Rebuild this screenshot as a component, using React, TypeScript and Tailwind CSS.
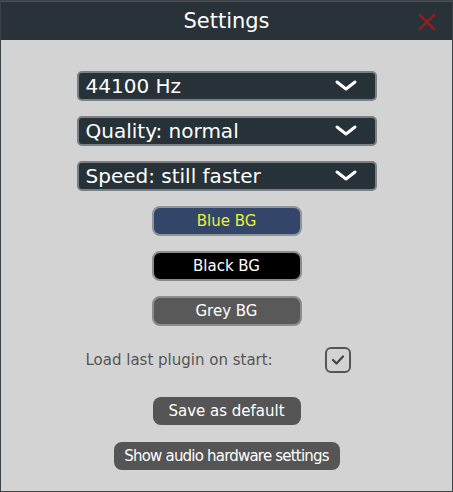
import React from "react";

const font = { fontFamily: '"DejaVu Sans", Verdana, sans-serif' };

function Chevron() {
  return (
    <svg width="24" height="14" viewBox="0 0 24 14" className="shrink-0">
      <path d="M3 3 L12 10 L21 3" fill="none" stroke="white" strokeWidth="3" strokeLinecap="round" strokeLinejoin="round" />
    </svg>
  );
}

function Dropdown({ label }: { label: string }) {
  return (
    <div className="w-[300px] h-[30px] bg-[#263238] border-2 border-[#7b8084] rounded-[5px] flex items-center justify-between pl-[7px] pr-[17px] text-white text-[20px] leading-none">
      <span className="whitespace-nowrap">{label}</span>
      <Chevron />
    </div>
  );
}

export default function App() {
  return (
    <div style={font} className="w-[453px] h-[492px] bg-[#d3d3d3] border border-[#3d4347] flex flex-col items-center relative overflow-hidden">
      <div className="w-full h-[39px] bg-[#283238] border-t border-[#4a5257] flex items-center justify-center relative shrink-0">
        <span className="text-white text-[21px] leading-none">Settings</span>
        <svg width="18" height="18" viewBox="0 0 18 18" className="absolute right-[16px] top-[11px]">
          <path d="M2 2 L16 16 M16 2 L2 16" stroke="#8e1f1f" strokeWidth="2.5" strokeLinecap="round" />
        </svg>
      </div>
      <div className="mt-[31px] flex flex-col gap-[15px]">
        <Dropdown label="44100 Hz" />
        <Dropdown label="Quality: normal" />
        <Dropdown label="Speed: still faster" />
      </div>
      <div className="mt-[15px] flex flex-col gap-[15px]">
        <div className="w-[150px] h-[30px] rounded-[8px] bg-[#33466a] border-2 border-[#8c949c] flex items-center justify-center text-[#e8f03a] text-[15px]">Blue BG</div>
        <div className="w-[150px] h-[30px] rounded-[8px] bg-black border-2 border-[#8c8c8c] flex items-center justify-center text-white text-[15px]">Black BG</div>
        <div className="w-[150px] h-[30px] rounded-[8px] bg-[#595959] border-2 border-[#8c8c8c] flex items-center justify-center text-white text-[15px]">Grey BG</div>
      </div>
      <div className="mt-[21px] w-[300px] flex items-center justify-between pl-[9px] pr-[26px]">
        <span className="text-[#555555] text-[15px] whitespace-nowrap">Load last plugin on start:</span>
        <div className="w-[26px] h-[26px] border-2 border-[#555555] rounded-[6px] flex items-center justify-center">
          <svg width="14" height="12" viewBox="0 0 14 12">
            <path d="M2 6 L5.5 9.5 L12 2.5" fill="none" stroke="#444" strokeWidth="2.2" strokeLinecap="round" strokeLinejoin="round" />
          </svg>
        </div>
      </div>
      <div className="mt-[24px] w-[148px] h-[28px] rounded-[8px] bg-[#555555] flex items-center justify-center text-white text-[15px] whitespace-nowrap">Save as default</div>
      <div className="mt-[17px] w-[226px] h-[28px] rounded-[8px] bg-[#555555] flex items-center justify-center text-white text-[15px] tracking-[-0.8px] whitespace-nowrap">Show audio hardware settings</div>
    </div>
  );
}
